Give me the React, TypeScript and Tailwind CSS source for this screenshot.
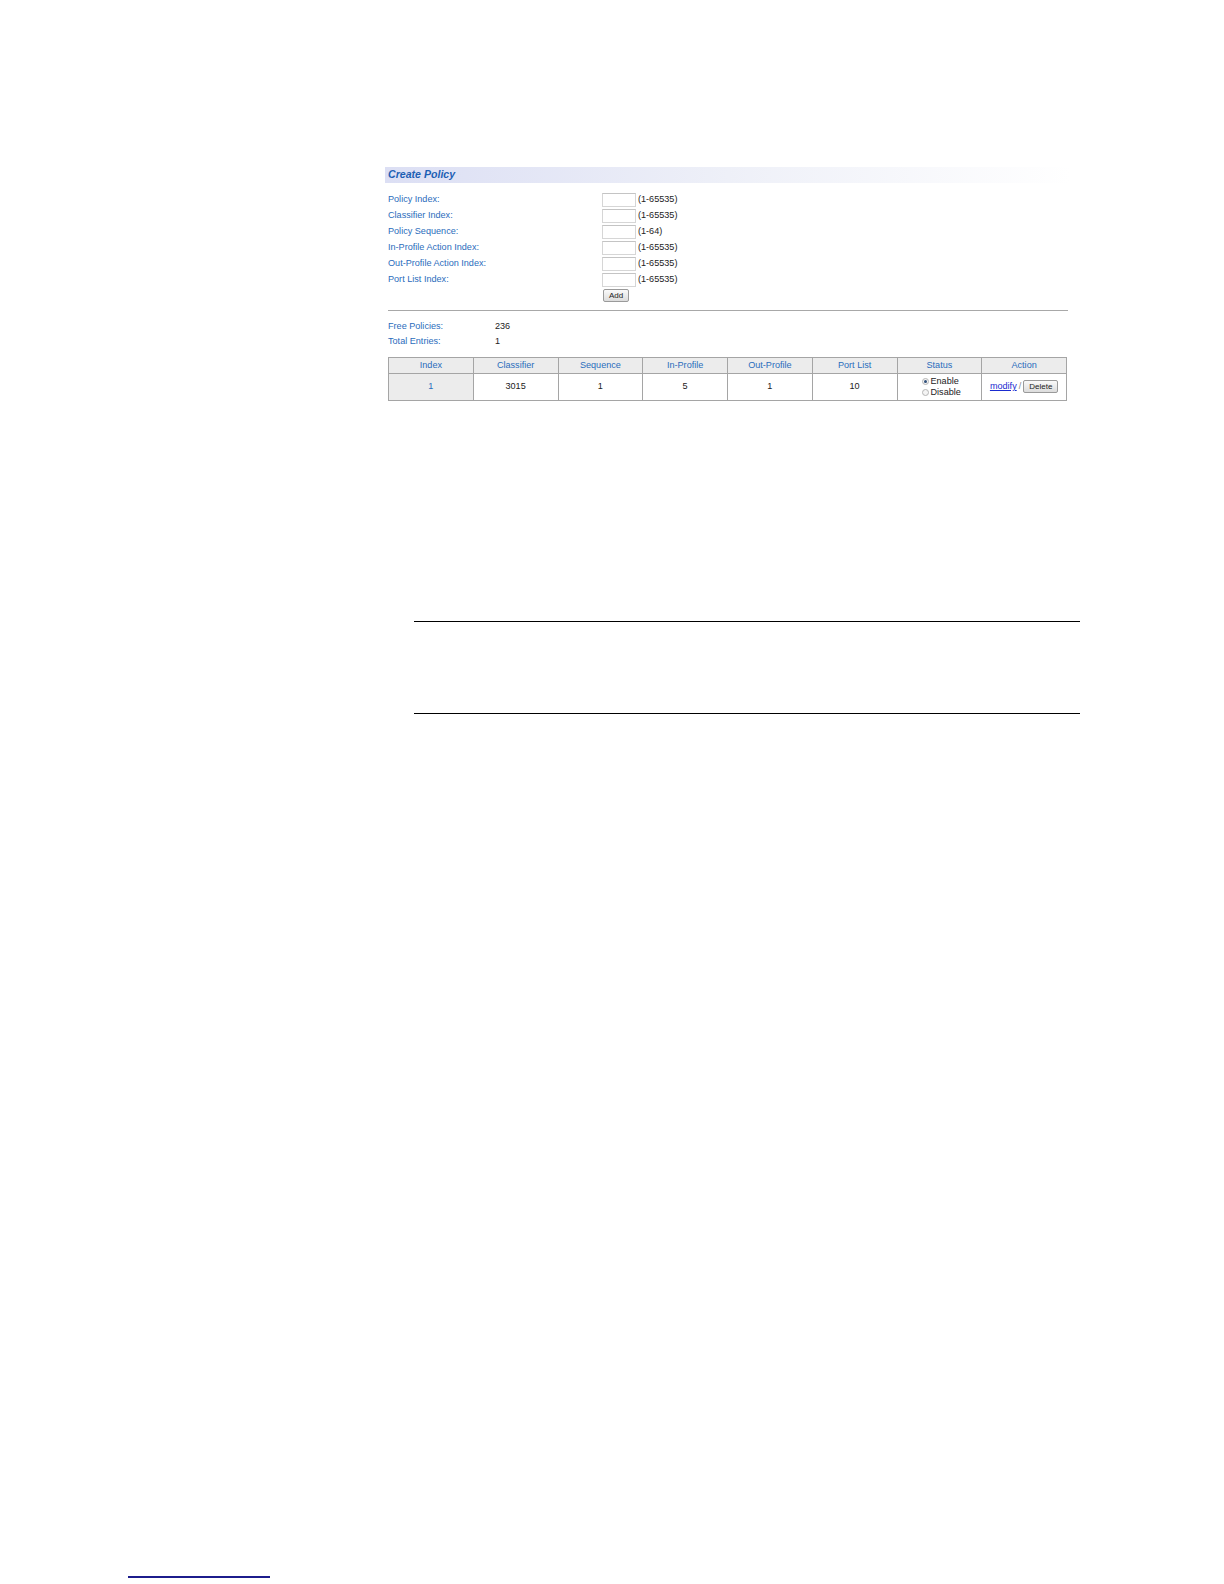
import React from "react";

const fields = [
    { label: "Policy Index:", range: "(1-65535)" },
    { label: "Classifier Index:", range: "(1-65535)" },
    { label: "Policy Sequence:", range: "(1-64)" },
    { label: "In-Profile Action Index:", range: "(1-65535)" },
    { label: "Out-Profile Action Index:", range: "(1-65535)" },
    { label: "Port List Index:", range: "(1-65535)" },
];

const columns = ["Index", "Classifier", "Sequence", "In-Profile", "Out-Profile", "Port List", "Status", "Action"];

function Radio({ checked }: { checked?: boolean }) {
    return (
        <span className="inline-flex h-[7px] w-[7px] items-center justify-center rounded-full border border-[#b5b5b5] bg-[#f4f4f4]">
            {checked && <span className="h-[3px] w-[3px] rounded-full bg-[#30507a]"></span>}
        </span>
    );
}

function SmallButton({ children }: { children: React.ReactNode }) {
    return (
        <button className="h-[13px] rounded-[2px] border border-[#9a9a9a] bg-gradient-to-b from-[#fafafa] to-[#dcdcdc] px-[5px] text-[8px] leading-[11px] text-[#222]">
            {children}
        </button>
    );
}

export default function App() {
    return (
        <div className="h-[1584px] w-full overflow-hidden bg-white font-['Liberation_Sans',Arial,sans-serif] text-[9.1px]">
            <div className="pl-[385px] pt-[167px]">
                <div className="w-[686px]">
                    {/* header bar */}
                    <div className="flex h-[16px] items-center bg-gradient-to-r from-[#dcdff4] via-[#eef0f8] to-white pl-[3px]">
                        <span className="text-[10.6px] font-bold italic text-[#1d5fb4]">Create Policy</span>
                    </div>

                    {/* form */}
                    <div className="mt-[9px] pl-[3px]">
                        {fields.map((f) => (
                            <div key={f.label} className="grid h-[16px] grid-cols-[214px_auto] items-center">
                                <span className="text-[#2a6cbc]">{f.label}</span>
                                <div className="flex items-center">
                                    <input className="h-[14px] w-[34px] border border-[#d6d6d6] border-t-[#c4c4c4] bg-white" />
                                    <span className="ml-[2px] text-[#222]">{f.range}</span>
                                </div>
                            </div>
                        ))}
                        <div className="mt-[1px] pl-[215px]">
                            <SmallButton>Add</SmallButton>
                        </div>
                    </div>

                    <div className="ml-[3px] mt-[7px] h-px w-[680px] bg-[#a8a8a8]"></div>

                    {/* stats */}
                    <div className="mt-[9px] pl-[3px]">
                        <div className="grid h-[15px] grid-cols-[107px_auto] items-center">
                            <span className="text-[#2a6cbc]">Free Policies:</span>
                            <span className="text-[#222]">236</span>
                        </div>
                        <div className="grid h-[15px] grid-cols-[107px_auto] items-center">
                            <span className="text-[#2a6cbc]">Total Entries:</span>
                            <span className="text-[#222]">1</span>
                        </div>
                    </div>

                    {/* table */}
                    <table className="ml-[3px] mt-[7px] w-[679px] table-fixed border-collapse border border-[#a5a5a5]">
                        <thead>
                            <tr className="h-[16px] bg-[#ececec]">
                                {columns.map((c) => (
                                    <th key={c} className="border border-[#a5a5a5] p-0 pt-[1px] text-center font-normal text-[#2a6cbc]">
                                        {c}
                                    </th>
                                ))}
                            </tr>
                        </thead>
                        <tbody>
                            <tr className="h-[27px]">
                                <td className="border border-[#a5a5a5] bg-[#ececec] p-0 text-center text-[#2a6cbc]">1</td>
                                <td className="border border-[#a5a5a5] p-0 text-center text-[#222]">3015</td>
                                <td className="border border-[#a5a5a5] p-0 text-center text-[#222]">1</td>
                                <td className="border border-[#a5a5a5] p-0 text-center text-[#222]">5</td>
                                <td className="border border-[#a5a5a5] p-0 text-center text-[#222]">1</td>
                                <td className="border border-[#a5a5a5] p-0 text-center text-[#222]">10</td>
                                <td className="border border-[#a5a5a5] p-0 text-[#222]">
                                    <div className="flex flex-col items-start pl-[24px] leading-[11px]">
                                        <span className="flex items-center gap-[2px]"><Radio checked /> Enable</span>
                                        <span className="flex items-center gap-[2px]"><Radio /> Disable</span>
                                    </div>
                                </td>
                                <td className="border border-[#a5a5a5] p-0">
                                    <div className="flex items-center justify-center gap-[2px]">
                                        <a className="text-[#1a2bd0] underline">modify</a>
                                        <span className="text-[#888]">/</span>
                                        <SmallButton>Delete</SmallButton>
                                    </div>
                                </td>
                            </tr>
                        </tbody>
                    </table>
                </div>
            </div>

            {/* note rules */}
            <div className="ml-[414px] mt-[220px] h-[93px] w-[666px] border-y border-black"></div>

            {/* footer link rule */}
            <div className="ml-[128px] mt-[862px] h-[2px] w-[142px] bg-[#1c1c8c]"></div>
        </div>
    );
}
